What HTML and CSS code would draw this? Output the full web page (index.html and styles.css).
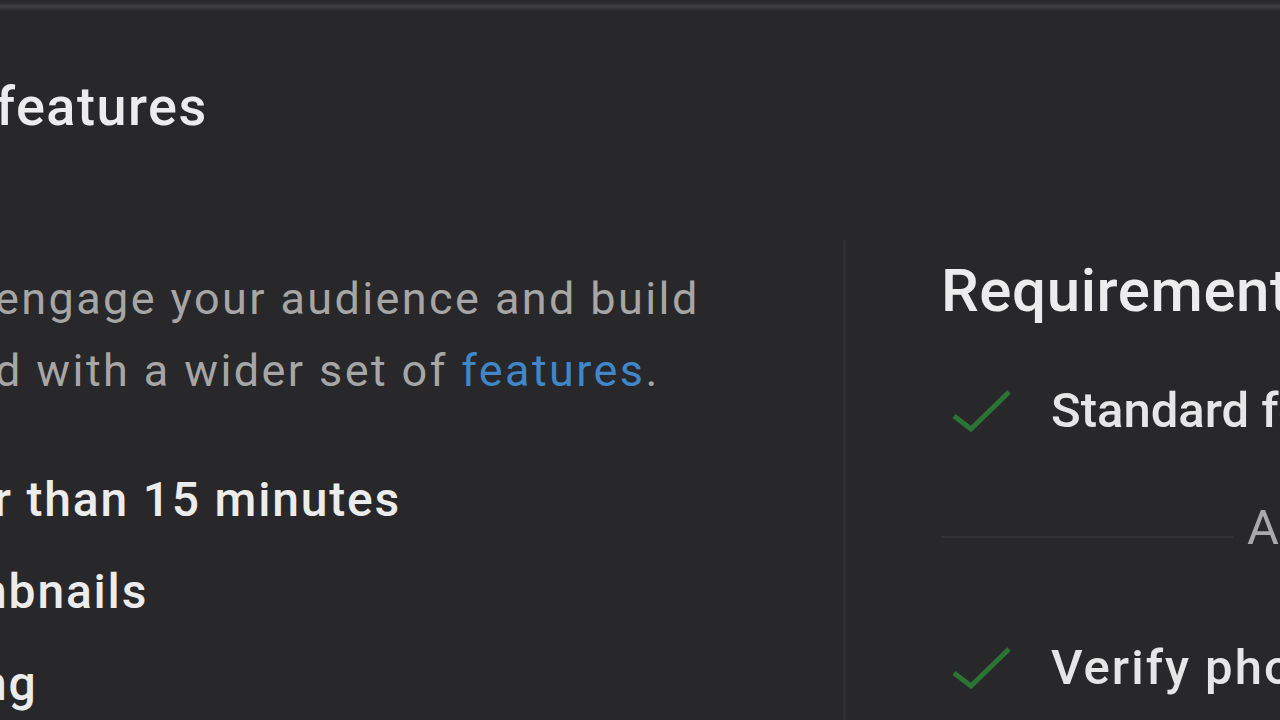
FILE: index.html
```html
<!DOCTYPE html>
<html lang="en">
<head>
<meta charset="utf-8">
<title>Features</title>
<link rel="stylesheet" href="styles.css">
</head>
<body>
<div class="topbar"></div>
<div class="page">
  <section class="left">
    <h1 class="title clip-f">features</h1>
    <p class="desc">
      <span class="line clip-e">engage your audience and build</span>
      <span class="line clip-d">d with a wider set of <a class="link" href="#">features</a>.</span>
    </p>
    <ul class="list">
      <li class="item clip-r">r than 15 minutes</li>
      <li class="item clip-m">mbnails</li>
      <li class="item clip-n">ng</li>
    </ul>
  </section>
  <aside class="right">
    <h2 class="req-title">Requirements</h2>
    <div class="req-row">
      <svg class="check" viewBox="0 0 60 50" width="60" height="50" aria-hidden="true"><path d="M3 30 L20 43 L58 6" fill="none" stroke="#2c7336" stroke-width="5"/></svg>
      <span class="req-text">Standard features</span>
    </div>
    <div class="req-sep">
      <span class="sep-line"></span>
      <span class="sep-text">Advanced features</span>
    </div>
    <div class="req-row">
      <svg class="check" viewBox="0 0 60 50" width="60" height="50" aria-hidden="true"><path d="M3 30 L20 43 L58 6" fill="none" stroke="#2c7336" stroke-width="5"/></svg>
      <span class="req-text wide">Verify phone number</span>
    </div>
  </aside>
</div>
</body>
</html>
```

FILE: styles.css
```css
html, body {
  margin: 0;
  padding: 0;
  width: 1280px;
  height: 720px;
  overflow: hidden;
  background: #28282a;
  font-family: Roboto, "Noto Sans", "Liberation Sans", sans-serif;
}

.topbar {
  height: 11px;
  background: linear-gradient(to bottom, #262627 0px, #2d2c2e 3px, #403e41 6px, #38373a 8px, #2a2a2c 11px);
}

.page {
  display: flex;
  height: 709px;
}

.left {
  flex: 0 0 843px;
  overflow: hidden;
}

.title {
  margin: 64px 0 0 0;
  font-size: 54px;
  line-height: 64px;
  font-weight: 500;
  letter-spacing: 1.5px;
  color: #ececec;
  white-space: nowrap;
}

.desc {
  margin: 124px 0 0 0;
  font-size: 45px;
  line-height: 72px;
  letter-spacing: 2.4px;
  color: #a6a6a6;
}

.line {
  display: block;
  white-space: nowrap;
}

.link {
  color: #3f87c8;
  text-decoration: none;
}

.list {
  list-style: none;
  margin: 47px 0 0 0;
  padding: 0;
}

.item {
  font-size: 48px;
  line-height: 92px;
  font-weight: 500;
  letter-spacing: 1.8px;
  color: #ececec;
  white-space: nowrap;
}

.clip-f { margin-left: -4px; }
.clip-e { margin-left: -5px; }
.clip-d { margin-left: -5px; }
.clip-r { margin-left: -6px; }
.clip-m { margin-left: -35px; }
.clip-n { margin-left: -20px; }

.right {
  flex: 1;
  margin-top: 229px;
  border-left: 3px solid #2f2d2f;
  padding-left: 95px;
  overflow: hidden;
  white-space: nowrap;
}

.req-title {
  margin: 16px 0 0 0;
  font-size: 60px;
  line-height: 70px;
  font-weight: 500;
  letter-spacing: 0.6px;
  color: #ececec;
}

.req-row {
  display: flex;
  align-items: center;
  gap: 40px;
  padding-left: 10px;
  height: 60px;
  margin-top: 55px;
}

.req-row + .req-sep + .req-row {
  margin-top: 80px;
}

.check {
  flex: 0 0 60px;
}

.req-text {
  font-size: 49px;
  line-height: 60px;
  font-weight: 500;
  color: #e6e6e6;
}

.req-text.wide {
  letter-spacing: 2px;
}

.req-sep {
  display: flex;
  align-items: flex-start;
  gap: 14px;
  height: 60px;
  margin-top: 57px;
}

.sep-line {
  flex: 0 0 292px;
  height: 2px;
  margin-top: 38px;
  background: #323133;
}

.sep-text {
  font-size: 49px;
  line-height: 60px;
  color: #a9a9a9;
}
```
